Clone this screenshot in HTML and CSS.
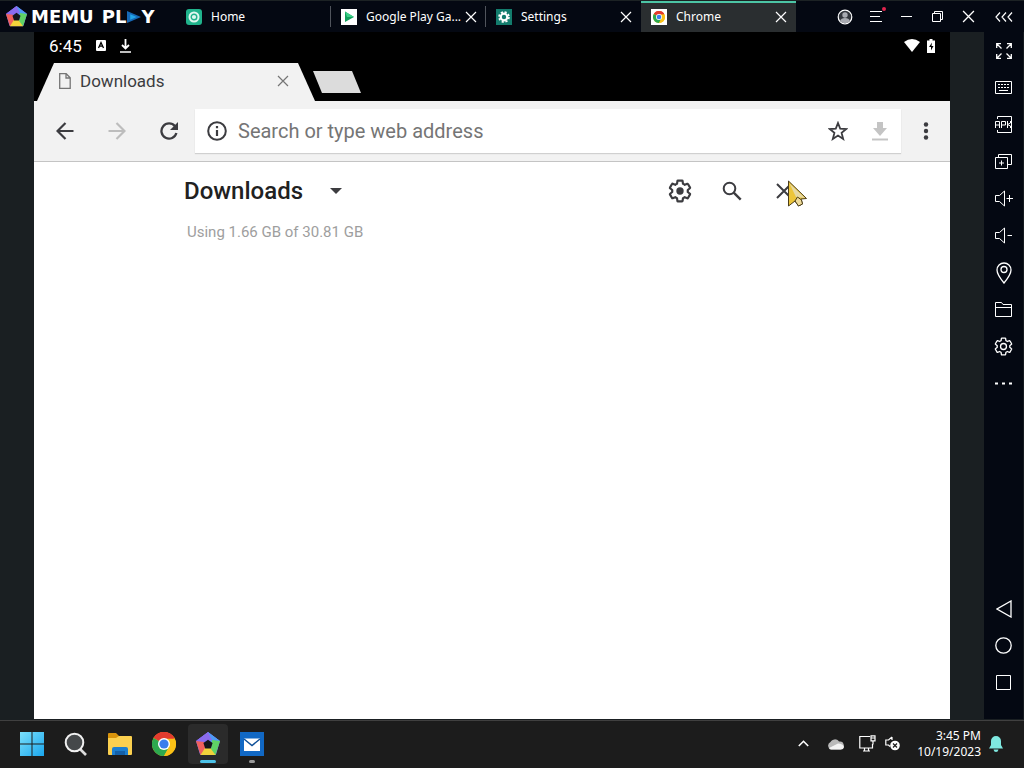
FILE: index.html
```html
<!DOCTYPE html>
<html lang="en">
<head>
    <meta charset="UTF-8">
    <meta name="viewport" content="width=device-width, initial-scale=1.0">
    <title>MEmu Play - Chrome</title>
    <link rel="stylesheet" href="styles.css">
</head>
<body>
    <!-- Shared icons -->
    <svg class="sprite" aria-hidden="true">
        <symbol id="icon-close" viewBox="0 0 12 12">
            <path d="M1 1l10 10M11 1L1 11" fill="none" stroke="currentColor" stroke-width="1.2"/>
        </symbol>
        <symbol id="icon-chrome" viewBox="0 0 24 24">
            <circle cx="12" cy="12" r="12" fill="#fbc116"/>
            <path d="M12 12L1.6 6A12 12 0 0 1 22.4 6z" fill="#e33b2e"/>
            <path d="M1.6 6A12 12 0 0 0 12 24L17.2 15 12 12z" fill="#2da94f"/>
            <path d="M12 6.5H22.7A12 12 0 0 1 12 24L17 15z" fill="#fbc116"/>
            <path d="M1.6 6A12 12 0 0 1 22.6 6.5H12z" fill="#e33b2e"/>
            <circle cx="12" cy="12" r="6" fill="#fff"/>
            <circle cx="12" cy="12" r="4.6" fill="#3b7ded"/>
        </symbol>
        <symbol id="icon-memu" viewBox="0 0 24 24">
            <path d="M12 .5L23.500 9 19.500 22.500h-15L.5 9z" fill="#7a6cf0" stroke="#7a6cf0" stroke-linejoin="round"/>
            <path d="M12 0L24 9 17 12 12 7z" fill="#4d9cf5"/>
            <path d="M12 0L0 9l6 5 2-4 8-2z" fill="#8a6bee"/>
            <path d="M0 9l4.500 14L11 18 8 10z" fill="#f0605c"/>
            <path d="M4.500 23H19.500L18 16 9 16z" fill="#f2d33b"/>
            <path d="M19.500 23L24 9 16 8l-1 9z" fill="#5fd365"/>
            <path class="hole" d="M12 7.800l4.600 3.300-1.800 5.400H9.200l-1.800-5.400z"/>
        </symbol>
        <symbol id="icon-gear" viewBox="0 0 24 24">
            <path d="M19.140 12.940c.04-.3.06-.61.06-.94 0-.32-.02-.64-.07-.94l2.030-1.580c.18-.14.23-.41.12-.61l-1.920-3.320c-.12-.22-.37-.29-.59-.22l-2.390.96c-.5-.38-1.030-.7-1.620-.94l-.36-2.540c-.04-.24-.24-.41-.48-.41h-3.840c-.24 0-.43.17-.47.41l-.36 2.540c-.59.24-1.130.57-1.620.94l-2.390-.96c-.22-.08-.47 0-.59.22L2.740 8.870c-.12.21-.08.47.12.61l2.030 1.580c-.05.3-.09.63-.09.94s.02.64.07.94l-2.030 1.580c-.18.14-.23.41-.12.61l1.920 3.320c.12.22.37.29.59.22l2.390-.96c.5.38 1.030.7 1.620.94l.36 2.540c.05.24.24.41.48.41h3.840c.24 0 .44-.17.47-.41l.36-2.540c.59-.24 1.130-.56 1.620-.94l2.390.96c.22.08.47 0 .59-.22l1.920-3.320c.12-.22.07-.47-.12-.61z" fill="none" stroke="currentColor" stroke-linejoin="round"/>
        </symbol>
    </svg>

    <header class="titlebar">
        <div class="brand">
            <svg class="brand-mark" viewBox="0 0 24 24"><use href="#icon-memu"/></svg>
            <span class="brand-name">MEMU</span>
            <span class="brand-name">PL</span>
            <svg class="brand-play" viewBox="0 0 13 11"><path d="M0 0l13 5.500L0 11z" fill="#1668b5"/><path d="M3 3l6 2.500L3 8z" fill="#22a6e8"/></svg>
            <span class="brand-name">Y</span>
        </div>

        <nav class="tabs">
            <div class="tab">
                <svg class="tab-icon" viewBox="0 0 16 16"><rect width="16" height="16" rx="3" fill="#20b38c"/><circle cx="8" cy="8" r="5.500" fill="#dff7ef"/><circle cx="8" cy="8" r="2.800" fill="none" stroke="#20b38c" stroke-width="1.400"/></svg>
                <span class="tab-title">Home</span>
            </div>
            <div class="tab">
                <svg class="tab-icon" viewBox="0 0 16 16"><rect width="16" height="16" fill="#fff"/><path d="M4 2.500l9 5.500-9 5z" fill="#12a05c"/><path d="M4 2.500l9 5.500H6z" fill="#3ccf87"/></svg>
                <span class="tab-title">Google Play Ga...</span>
                <button class="tab-close" aria-label="Close Google Play Games"><svg><use href="#icon-close"/></svg></button>
            </div>
            <div class="tab">
                <svg class="tab-icon" viewBox="0 0 16 16"><rect width="16" height="16" fill="#137c6d"/><circle cx="8" cy="8" r="3.300" fill="none" stroke="#fff" stroke-width="2.200"/><circle cx="8" cy="8" r="5" fill="none" stroke="#fff" stroke-width="1.600" stroke-dasharray="2.200 1.730"/></svg>
                <span class="tab-title">Settings</span>
                <button class="tab-close" aria-label="Close Settings"><svg><use href="#icon-close"/></svg></button>
            </div>
            <div class="tab active">
                <svg class="tab-icon" viewBox="0 0 16 16"><rect width="16" height="16" fill="#fff"/><use href="#icon-chrome" x="2" y="2" width="12" height="12"/></svg>
                <span class="tab-title">Chrome</span>
                <button class="tab-close" aria-label="Close Chrome"><svg><use href="#icon-close"/></svg></button>
            </div>
        </nav>

        <div class="window-controls">
            <button aria-label="Account"><svg width="16" height="16" viewBox="0 0 16 16"><circle cx="8" cy="8" r="6.800" fill="#33363c" stroke="#fff" stroke-width="1.200"/><circle cx="8" cy="6" r="2.700" fill="#a8aab0"/><path d="M3 12q1-3 5-3t5 3q-2 2.400-5 2.400T3 12z" fill="#a8aab0"/></svg></button>
            <button class="has-dot" aria-label="Menu"><svg width="12" height="11" viewBox="0 0 12 11"><path d="M0 .5h12M0 5.500h10M0 10.500h12" stroke="#fff"/></svg></button>
            <button aria-label="Minimize"><svg width="11" height="11" viewBox="0 0 11 11"><path d="M0 5.500h11" stroke="#fff"/></svg></button>
            <button aria-label="Restore"><svg width="11" height="11" viewBox="0 0 11 11"><path d="M.5 2.500h8v8h-8zM2.500 2.500v-2h8v8h-2" fill="none" stroke="#fff"/></svg></button>
            <button aria-label="Close"><svg width="13" height="13"><use href="#icon-close"/></svg></button>
            <button class="collapse" aria-label="Collapse sidebar"><svg width="18" height="10" viewBox="0 0 18 10"><path d="M5 .5L1 5l4 4.500M11 .5L7 5l4 4.500M17 .5L13 5l4 4.500" fill="none" stroke="#fff" stroke-width="1.200"/></svg></button>
        </div>
    </header>

    <div class="workspace">
        <!-- Android screen -->
        <main class="screen">
            <div class="status-bar">
                <span class="status-time">6:45</span>
                <svg width="10" height="11" viewBox="0 0 10 11"><rect width="10" height="11" rx="1" fill="#fff"/><path d="M2.500 8L5 2.500 7.500 8M3.500 6.200h3" fill="none" stroke="#000" stroke-width="1.300"/></svg>
                <svg width="11" height="14" viewBox="0 0 11 14"><path d="M5.500 0v9M2 6l3.500 3.500L9 6" fill="none" stroke="#fff" stroke-width="1.800"/><path d="M0 13h11" stroke="#fff" stroke-width="1.500"/></svg>
                <svg class="wifi" width="16" height="13" viewBox="0 0 16 13"><path d="M0 3q8-6 16 0L8 13z" fill="#fff"/></svg>
                <svg width="8" height="14" viewBox="0 0 8 14"><path d="M2.500 0h3v1.500H8V14H0V1.500h2.500z" fill="#fff"/><path d="M5 3.500L2 8h2v3.500L6.500 7H4.500z" fill="#000"/></svg>
            </div>

            <div class="browser-tabs">
                <div class="browser-tab">
                    <svg width="12" height="16" viewBox="0 0 12 16"><path d="M.7.7h6.500l4 4v10.600H.7zM7 .7V5h4.200" fill="none" stroke="#757575" stroke-width="1.300"/></svg>
                    <span>Downloads</span>
                    <button aria-label="Close tab"><svg width="12" height="12"><use href="#icon-close"/></svg></button>
                </div>
                <button class="new-tab" aria-label="New tab"></button>
            </div>

            <div class="toolbar">
                <button aria-label="Back"><svg width="18" height="18" viewBox="0 0 18 18"><path d="M17.500 9H2M9.500 1L1.500 9l8 8" fill="none" stroke="#3c3c40" stroke-width="2.200"/></svg></button>
                <button aria-label="Forward" disabled><svg width="18" height="18" viewBox="0 0 18 18"><path d="M.5 9H16M8.500 1l8 8-8 8" fill="none" stroke="#bdbdbd" stroke-width="2.200"/></svg></button>
                <button aria-label="Reload"><svg width="18" height="18" viewBox="0 0 18 18"><path d="M15 4.300A7.600 7.600 0 1 0 16.400 11" fill="none" stroke="#3c3c40" stroke-width="2.300"/><path d="M18 0v8h-8z" fill="#3c3c40"/></svg></button>
                <div class="omnibox">
                    <svg width="20" height="20" viewBox="0 0 20 20"><circle cx="10" cy="10" r="8.800" fill="none" stroke="#3c3c40" stroke-width="2"/><path d="M10 9v6M10 5v2.200" stroke="#3c3c40" stroke-width="2.200"/></svg>
                    <input type="text" placeholder="Search or type web address" aria-label="Search or type web address">
                    <button aria-label="Bookmark"><svg width="20" height="20" viewBox="0 0 20 20"><path d="M10 2l2.200 5.600 6 .4-4.600 3.900L15.200 18 10 14.600 4.800 18l1.600-6.100L1.800 8l6-.4z" fill="none" stroke="#3c3c40" stroke-width="1.800"/></svg></button>
                    <button aria-label="Download page" disabled><svg width="16" height="19" viewBox="0 0 16 19"><path d="M5 0h6v6h4l-7 8-7-8h4z" fill="#c4c4c4"/><path d="M0 17.500h16" stroke="#c4c4c4" stroke-width="2"/></svg></button>
                </div>
                <button class="more" aria-label="More"><svg width="6" height="18" viewBox="0 0 6 18"><g fill="#3c3c40"><circle cx="3" cy="2.500" r="2.200"/><circle cx="3" cy="9" r="2.200"/><circle cx="3" cy="15.500" r="2.200"/></g></svg></button>
            </div>

            <section class="downloads">
                <div class="downloads-header">
                    <label class="filter">
                        <select aria-label="File type">
                            <option>Downloads</option>
                        </select>
                        <svg width="12" height="6" viewBox="0 0 12 6"><path d="M0 0h12L6 6z" fill="#3c3c40"/></svg>
                    </label>
                    <button aria-label="Settings"><svg width="26" height="26" viewBox="0 0 24 24"><use href="#icon-gear" stroke-width="2"/><circle cx="12" cy="12" r="3.400" fill="#3c3c40"/></svg></button>
                    <button aria-label="Search"><svg width="20" height="20" viewBox="0 0 20 20"><circle cx="7.500" cy="7.500" r="5.800" fill="none" stroke="#3c3c40" stroke-width="2"/><path d="M11.700 11.700l7 7" stroke="#3c3c40" stroke-width="2.400"/></svg></button>
                    <button class="close-page" aria-label="Close">
                        <svg width="16" height="16" viewBox="0 0 16 16"><path d="M1 1l14 14M15 1L1 15" stroke="#3c3c40" stroke-width="2"/></svg>
                        <svg class="pointer" width="21" height="28" viewBox="0 0 21 28"><path d="M1.500 1L19.500 18.500 14 19l1.500 5-4 2L8 21l-6.500 5z" fill="#ecc53a" stroke="#4b3d18"/><path d="M2.500 3.500L18 18l-9-1z" fill="#e6d9a4"/><path d="M8 21l2.500-4 4 3 1 4-4 2z" fill="#f0dc9a" stroke="#4b3d18"/></svg>
                    </button>
                </div>
                <p class="usage">Using 1.66 GB of 30.81 GB</p>
            </section>
        </main>

        <aside class="sidebar">
            <button aria-label="Full screen"><svg width="16" height="16" viewBox="0 0 16 16"><path d="M.7 5V.7H5M11 .7h4.300V5M15.300 11v4.300H11M5 15.300H.7V11M1 1l4.500 4.500M15 1l-4.500 4.500M15 15l-4.500-4.500M1 15l4.500-4.500" stroke-width="1.300"/></svg></button>
            <button aria-label="Keymapping"><svg width="17" height="13" viewBox="0 0 17 13"><path d="M.5.5h16v12H.5zM4 9.500h9"/><path d="M3 3.500h11M3 6.500h11" stroke-dasharray="2 1"/></svg></button>
            <button aria-label="Install APK"><svg width="17" height="17" viewBox="0 0 17 17"><path d="M2.500 3V.5h14v16h-14V14M.5 12V5.500h4V12M.5 9h4M6.500 12V5.500h4V9h-4M12.500 5v7M15.500 5v2l-3 1.500 3 1.500v2"/></svg></button>
            <button aria-label="Multi instance"><svg width="17" height="15" viewBox="0 0 17 15"><path d="M.5 3.500h12v11H.5zM3.500 3.500v-3h13v10h-4M6.500 6.500v5M4 9h5"/></svg></button>
            <button aria-label="Volume up"><svg width="18" height="17" viewBox="0 0 18 17"><path d="M.5 5.500h4l5-4.500v15l-5-4.500h-4zM11.500 8.500H18M14.500 5v7"/></svg></button>
            <button aria-label="Volume down"><svg width="18" height="17" viewBox="0 0 18 17"><path d="M.5 5.500h4l5-4.500v15l-5-4.500h-4zM12.500 8.500H17"/></svg></button>
            <button aria-label="Location"><svg width="16" height="22" viewBox="0 0 16 22"><path d="M8 21Q1 12.500 1 8a7 7 0 0 1 14 0q0 4.500-7 13z" stroke-width="1.300"/><circle cx="8" cy="7.500" r="3" stroke-width="1.300"/></svg></button>
            <button aria-label="Shared folder"><svg width="17" height="15" viewBox="0 0 17 15"><path d="M.5 14.500V.5h6l1.500 2h8.500v12zM.5 5.500h16"/></svg></button>
            <button aria-label="Emulator settings"><svg width="21" height="21" viewBox="0 0 24 24"><use href="#icon-gear" stroke-width="1.500"/><circle cx="12" cy="12" r="3.400" stroke-width="1.500"/></svg></button>
            <button aria-label="More tools"><svg width="17" height="3" viewBox="0 0 17 3"><path d="M0 1.500h3M7 1.500h3M14 1.500h3" stroke-width="2"/></svg></button>
            <div class="android-nav">
                <button aria-label="Back"><svg width="16" height="18" viewBox="0 0 16 18"><path d="M15 1v16L1 9z" stroke-width="1.300"/></svg></button>
                <button aria-label="Home"><svg width="17" height="17" viewBox="0 0 17 17"><circle cx="8.500" cy="8.500" r="7.700" stroke-width="1.300"/></svg></button>
                <button aria-label="Recent apps"><svg width="15" height="15" viewBox="0 0 15 15"><path d="M.5.5h14v14H.5z"/></svg></button>
            </div>
        </aside>
    </div>

    <footer class="taskbar">
        <button class="task" aria-label="Start"><svg width="24" height="24" viewBox="0 0 24 24"><defs><linearGradient id="win" x1="0" y1="0" x2="1" y2="1"><stop offset="0" stop-color="#7be0fb"/><stop offset="1" stop-color="#1aa6ee"/></linearGradient></defs><path d="M0 0h11.500v11.500H0zM12.500 0H24v11.500H12.500zM0 12.500h11.500V24H0zM12.500 12.500H24V24H12.500z" fill="url(#win)"/></svg></button>
        <button class="task" aria-label="Search"><svg width="24" height="24" viewBox="0 0 24 24"><path d="M16 17l6 6" stroke="#dcdcdc" stroke-width="2.600"/><circle cx="10.500" cy="10.500" r="8.800" fill="#45484a" stroke="#f0f0f0" stroke-width="2"/></svg></button>
        <button class="task" aria-label="File Explorer"><svg width="24" height="24" viewBox="0 0 24 24"><path d="M0 2q0-1 1-1h7l3 3v4H0z" fill="#d9940c"/><path d="M0 6h8l3-2h12q1 0 1 1v17q0 1-1 1H1q-1 0-1-1z" fill="#fbd04f"/><path d="M4 23v-6q0-2 2-2h12q2 0 2 2v6z" fill="#1c7fd0"/><path d="M7 19h10v4H7z" fill="#1460a8"/></svg></button>
        <button class="task" aria-label="Chrome"><svg width="24" height="24"><use href="#icon-chrome"/></svg></button>
        <button class="task active" aria-label="MEmu"><svg width="24" height="24"><use href="#icon-memu"/></svg></button>
        <button class="task running" aria-label="Mail"><svg width="24" height="24" viewBox="0 0 24 24"><rect width="24" height="24" fill="#1168c4"/><path d="M4 6.500h16V19H4z" fill="#fff"/><path d="M4 7l8 6.500L20 7" fill="none" stroke="#0d4f98" stroke-width="1.400"/></svg></button>

        <div class="tray">
            <button class="tray-btn" aria-label="Show hidden icons"><svg width="11" height="7" viewBox="0 0 11 7"><path d="M.8 6l4.700-4.700L10.200 6" fill="none" stroke="#fff" stroke-width="1.600"/></svg></button>
            <button class="tray-btn" aria-label="OneDrive"><svg width="17" height="12" viewBox="0 0 17 12"><path d="M4 11.500a4 4 0 0 1-.5-7.500A5 5 0 0 1 12 3.500a4 4 0 0 1 1.500 8z" fill="#b9b9b9"/><path d="M2 10l9-4.500q5 0 6 3.500-.5 2.500-3 2.500H4q-1.500 0-2-1.500z" fill="#f3f3f3"/></svg></button>
            <button class="tray-btn" aria-label="Network"><svg width="17" height="17" viewBox="0 0 17 17"><path d="M11 1.500H.8v11.500h12.700V9M4 16h7M5.500 13v3M9.500 13v3M12 .8h4v5h-4zM12 3h4M14 6v3.500" fill="none" stroke="#fff" stroke-width="1.200"/></svg></button>
            <button class="tray-btn narrow" aria-label="Volume muted"><svg width="15" height="15" viewBox="0 0 15 15"><path d="M7 1L3.500 4H.8v5h2.700L5 10.500M7 1v3" fill="none" stroke="#fff" stroke-width="1.200"/><circle cx="10" cy="9.500" r="4.800" fill="#fff"/><path d="M8 7.500l4 4M12 7.500l-4 4" stroke="#1c1c1c" stroke-width="1.200"/></svg></button>
            <div class="clock">
                <span>3:45 PM</span>
                <span>10/19/2023</span>
            </div>
            <button class="bell" aria-label="Notifications"><svg width="14" height="16" viewBox="0 0 14 16"><path d="M7 0a5 5 0 0 1 5 5v4l2 3.500H0L2 9V5a5 5 0 0 1 5-5zM4.500 13.500h5Q9 16 7 16t-2.500-2.500z" fill="#7fe8e0"/></svg></button>
        </div>
    </footer>
</body>
</html>
```

FILE: styles.css
```css
* {
    box-sizing: border-box;
}

body {
    margin: 0;
    height: 100vh;
    display: flex;
    flex-direction: column;
    overflow: hidden;
    background: #1a1f22;
    color: #fff;
    font-family: "Noto Sans", "Open Sans", sans-serif;
    font-size: 12px;
}

button {
    display: flex;
    align-items: center;
    justify-content: center;
    padding: 0;
    border: none;
    background: none;
    color: inherit;
    cursor: pointer;
}

svg {
    display: block;
    flex: none;
}

.sprite {
    position: absolute;
    width: 0;
    height: 0;
}

.hole {
    fill: #14161c;
}

/* Title bar */
.titlebar {
    display: flex;
    flex: none;
    height: 32px;
    background: #040812;
    border-top: 1px solid #1c2224;
}

.brand {
    display: flex;
    align-items: center;
    width: 176px;
    padding-left: 6px;
}

.brand-mark {
    width: 21px;
    height: 21px;
    margin-right: 4px;
}

.brand-name {
    font-family: "DejaVu Sans", sans-serif;
    font-size: 18px;
    font-weight: bold;
    line-height: 20px;
    margin-right: 8px;
}

.brand-name + .brand-name {
    margin-right: 1px;
}

.brand-play {
    width: 14px;
    height: 12px;
}

.tabs {
    display: flex;
    flex: 0 1 620px;
}

.tab {
    display: flex;
    flex: 1;
    align-items: center;
    padding: 0 9px 0 10px;
}

.tab:nth-child(-n+2) {
    background: linear-gradient(#50545c, #50545c) right center / 1px 21px no-repeat;
}

.tab.active {
    background: #2a2e30;
    box-shadow: inset 0 2px #4cc5a5;
}

.tab-icon {
    width: 16px;
    height: 16px;
    margin-right: 9px;
}

.tab-title {
    flex: 1;
    white-space: nowrap;
}

.tab-close svg {
    width: 12px;
    height: 12px;
}

.window-controls {
    display: flex;
    margin-left: auto;
}

.window-controls button {
    width: 31px;
}

.window-controls .collapse {
    width: 40px;
}

.has-dot {
    position: relative;
}

.has-dot::after {
    content: "";
    position: absolute;
    top: 6px;
    right: 5px;
    width: 4px;
    height: 4px;
    border-radius: 50%;
    background: #e0244e;
}

/* Emulator area */
.workspace {
    display: flex;
    flex: 1;
    min-height: 0;
    padding-bottom: 1px;
}

.screen {
    flex: 1;
    margin: 0 34px;
    background: #fff;
    font-family: Roboto, sans-serif;
}

.status-bar {
    display: flex;
    align-items: center;
    gap: 14px;
    height: 31px;
    padding: 0 15px 4px;
    background: #000;
}

.status-time {
    font-size: 17px;
}

.wifi {
    margin-left: auto;
    margin-right: -7px;
}

.browser-tabs {
    display: flex;
    height: 38px;
    padding-left: 3px;
    background: #000;
}

.browser-tab {
    display: flex;
    align-items: center;
    width: 278px;
    padding: 0 26px 2px 22px;
    background: #f2f2f2;
    color: #3c3c40;
    font-size: 17px;
    clip-path: polygon(17px 0, 261px 0, 100% 100%, 0 100%);
}

.browser-tab span {
    flex: 1;
    margin-left: 9px;
}

.browser-tab button {
    color: #757575;
}

.new-tab {
    width: 48px;
    height: 22px;
    margin: 8px 0 0 -2px;
    background: #dcdcdc;
    clip-path: polygon(0 0, 39px 0, 100% 100%, 9px 100%);
}

.toolbar {
    display: flex;
    align-items: center;
    height: 61px;
    padding-left: 5px;
    background: #f2f2f2;
    border-bottom: 1px solid #c4c4c4;
}

.toolbar button {
    width: 52px;
    height: 44px;
}

.toolbar .more {
    width: 49px;
}

.omnibox {
    display: flex;
    flex: 1;
    align-items: center;
    height: 44px;
    padding-left: 12px;
    background: #fff;
    box-shadow: 0 1px 1px #d0d0d0;
}

.omnibox input {
    flex: 1;
    min-width: 0;
    margin-left: 11px;
    padding: 0;
    border: none;
    outline: none;
    font: 20px Roboto, sans-serif;
}

.omnibox input::placeholder {
    color: #757575;
}

.omnibox button {
    width: 42px;
}

/* Downloads page */
.downloads {
    max-width: 636px;
    margin: 0 auto;
    padding-left: 10px;
}

.downloads-header {
    display: flex;
    align-items: center;
    height: 58px;
    color: #3c3c40;
}

.downloads-header button {
    width: 52px;
    height: 52px;
}

.filter {
    display: flex;
    align-items: center;
    gap: 26px;
    margin-right: auto;
}

.filter select {
    appearance: none;
    padding: 0;
    border: none;
    background: none;
    color: #212121;
    font: 500 24px Roboto, sans-serif;
}

.close-page {
    position: relative;
}

.pointer {
    position: absolute;
    top: 15px;
    left: 29px;
}

.usage {
    margin: 3px;
    color: #9e9e9e;
    font-size: 15px;
    line-height: 18px;
}

/* Sidebar */
.sidebar {
    display: flex;
    flex-direction: column;
    width: 40px;
    padding-bottom: 18px;
    background: #040812;
    border-right: 1px solid #14191e;
}

.sidebar button {
    width: 100%;
    height: 37px;
}

.sidebar svg {
    fill: none;
    stroke: #fff;
}

.android-nav {
    margin-top: auto;
}

/* Taskbar */
.taskbar {
    display: flex;
    flex: none;
    align-items: center;
    gap: 4px;
    height: 48px;
    padding: 0 21px 2px 12px;
    background: #1c1c1c;
    border-top: 1px solid #404040;
}

.task {
    position: relative;
    width: 40px;
    height: 40px;
    border-radius: 4px;
}

.task.active {
    background: #2b2b2b;
}

.task.active::after,
.task.running::after {
    content: "";
    position: absolute;
    bottom: 1px;
    width: 16px;
    height: 3px;
    border-radius: 2px;
    background: #4cc2e8;
}

.task.running::after {
    width: 6px;
    background: #9a9a9a;
}

.tray {
    display: flex;
    align-items: center;
    margin-left: auto;
}

.tray-btn {
    width: 32px;
    height: 32px;
}

.tray-btn.narrow {
    width: 18px;
}

.clock {
    display: flex;
    flex-direction: column;
    margin: 0 8px 0 16px;
    line-height: 16px;
    text-align: right;
}
```
